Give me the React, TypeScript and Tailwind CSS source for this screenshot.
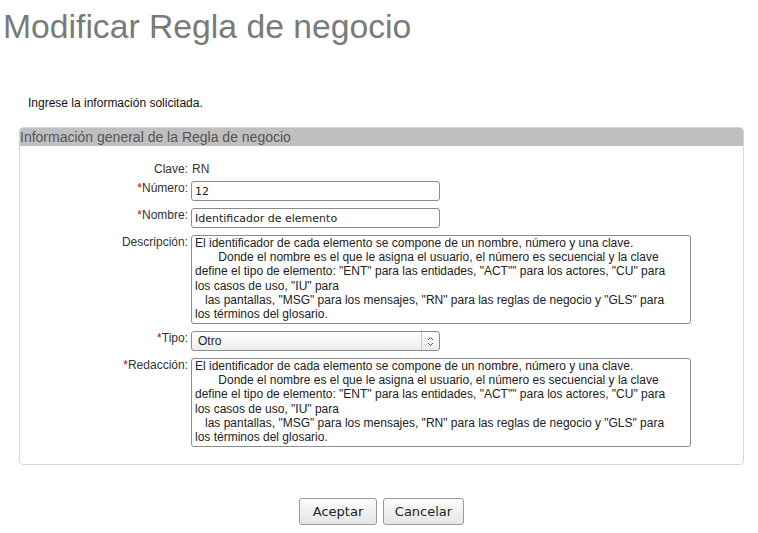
const TEXTO = [
  "El identificador de cada elemento se compone de un nombre, número y una clave.",
  "       Donde el nombre es el que le asigna el usuario, el número es secuencial y la clave",
  "define el tipo de elemento: \"ENT\" para las entidades, \"ACT\"\" para los actores, \"CU\" para",
  "los casos de uso, \"IU\" para",
  "   las pantallas, \"MSG\" para los mensajes, \"RN\" para las reglas de negocio y \"GLS\" para",
  "los términos del glosario.",
].join("\n");

function Row({ label, required, children }: { label: string; required?: boolean; children: React.ReactNode }) {
  return (
    <div className="flex items-start gap-[3px]">
      <label className="w-[168px] shrink-0 text-right text-[12px] leading-[12px] text-[#333] pt-[1px]">
        {required && <span className="text-[#cc0000]">*</span>}
        {label}:
      </label>
      {children}
    </div>
  );
}

function TextInput({ value }: { value: string }) {
  return (
    <input
      readOnly
      value={value}
      className="h-[20px] w-[249px] rounded-[3px] border border-[#8c8c8c] bg-white px-[3px] text-[11px] text-[#222] outline-none [font-family:'DejaVu_Sans',sans-serif]"
    />
  );
}

function TextArea({ value }: { value: string }) {
  return (
    <textarea
      readOnly
      wrap="off"
      value={value}
      className="h-[89px] w-[500px] resize-none overflow-hidden whitespace-pre rounded-[3px] border border-[#8c8c8c] bg-white px-[3px] pt-0 text-[12px] leading-[14.2px] text-[#222] outline-none"
    />
  );
}

export default function App() {
  return (
    <div className="min-h-[533px] w-[758px] bg-white [font-family:'Liberation_Sans',Arial,sans-serif]">
      <h1 className="pl-[3px] pt-[7px] text-[33.7px] leading-[38px] font-normal text-[#7a7a7a]">
        Modificar Regla de negocio
      </h1>

      <p className="mt-[51px] pl-[28px] text-[12px] leading-[14px] text-[#111]">
        Ingrese la información solicitada.
      </p>

      <div className="ml-[19px] mr-[14px] mt-[17px]">
        {/* Panel */}
        <div className="rounded-[4px] border border-[#d6d6d6]">
          <div className="h-[18px] rounded-t-[3px] bg-[#bfbfbf] text-[14px] leading-[18px] text-[#555]">
            Información general de la Regla de negocio
          </div>

          <div className="flex flex-col gap-[7px] pt-[17px] pb-[17px]">
            <div className="-mb-[1px] flex items-start gap-[3px] text-[12px] leading-[12px] text-[#333]">
              <span className="w-[168px] shrink-0 text-right">Clave:</span>
              <span className="pl-[1px]">RN</span>
            </div>

            <Row label="Número" required>
              <TextInput value="12" />
            </Row>
            <Row label="Nombre" required>
              <TextInput value="Identificador de elemento" />
            </Row>
            <Row label="Descripción">
              <TextArea value={TEXTO} />
            </Row>
            <Row label="Tipo" required>
              <div className="flex h-[20px] w-[249px] items-stretch rounded-[3px] border border-[#8c8c8c] bg-gradient-to-b from-white to-[#ececec] text-[12px] text-[#222]">
                <span className="flex flex-1 items-center pl-[6px]">Otro</span>
                <span className="flex w-[18px] items-center justify-center border-l border-[#c4c4c4]">
                  <svg width="7" height="11" viewBox="0 0 7 11" fill="none" stroke="#555" strokeWidth="1">
                    <path d="M1 4 L3.5 1.5 L6 4" />
                    <path d="M1 7 L3.5 9.5 L6 7" />
                  </svg>
                </span>
              </div>
            </Row>
            <Row label="Redacción" required>
              <TextArea value={TEXTO} />
            </Row>
          </div>
        </div>

        {/* Botones */}
        <div className="mt-[33px] flex justify-center gap-[6px] [font-family:'DejaVu_Sans',sans-serif]">
          <button className="h-[27px] w-[78px] rounded-[3px] border border-[#9a9a9a] bg-gradient-to-b from-[#fdfdfd] to-[#e4e4e4] text-[13px] text-[#222]">
            Aceptar
          </button>
          <button className="h-[27px] w-[81px] rounded-[3px] border border-[#9a9a9a] bg-gradient-to-b from-[#fdfdfd] to-[#e4e4e4] text-[13px] text-[#222]">
            Cancelar
          </button>
        </div>
      </div>
    </div>
  );
}
